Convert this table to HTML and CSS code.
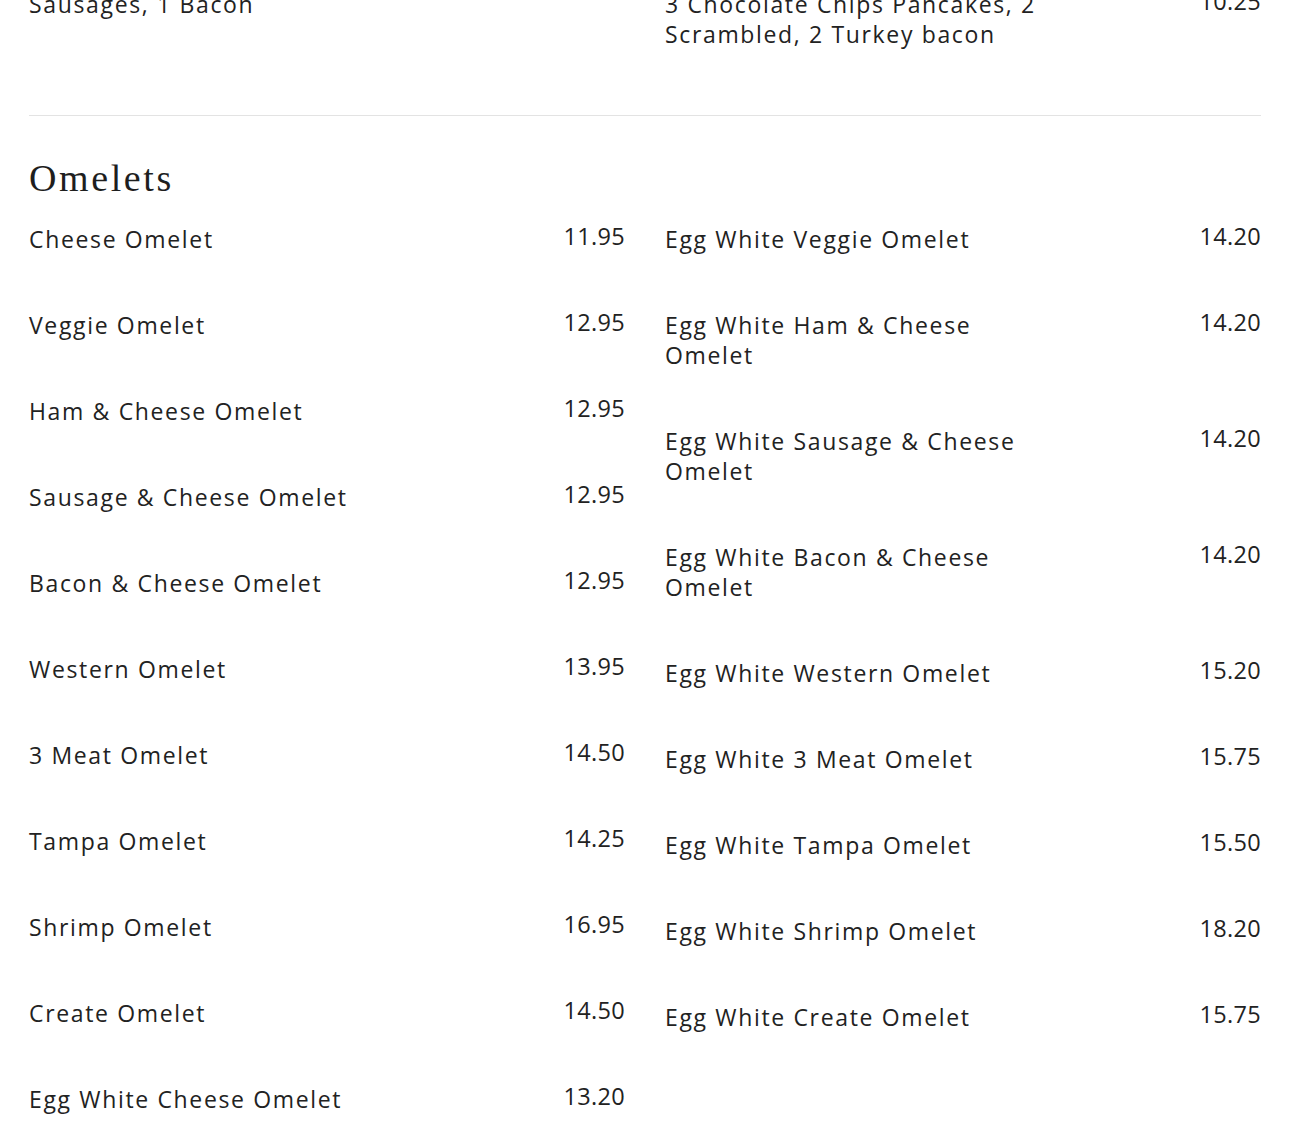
FILE: index.html
```html
<!DOCTYPE html>
<html lang="en">
<head>
<meta charset="utf-8">
<title>Menu</title>
<link rel="stylesheet" href="styles.css">
</head>
<body>
<main class="menu">
  <section class="menu-section">
    <h2 class="section-title">Breakfast Combos</h2>
    <div class="columns">
      <ul class="items">
        <li class="item"><span class="name">Pancake Combo</span><span class="price">9.95</span></li>
        <li class="item"><span class="name">2 Pancakes, 2 Scrambled, 2 Sausages, 1 Bacon</span><span class="price">10.25</span></li>
      </ul>
      <ul class="items">
        <li class="item"><span class="name">3 Pancakes, 2 Scrambled, 2 Turkey Sausages</span><span class="price">10.25</span></li>
        <li class="item"><span class="name">3 Chocolate Chips Pancakes, 2 Scrambled, 2 Turkey bacon</span><span class="price">10.25</span></li>
      </ul>
    </div>
  </section>

  <section class="menu-section">
    <h2 class="section-title">Omelets</h2>
    <div class="columns">
      <ul class="items">
        <li class="item"><span class="name">Cheese Omelet</span><span class="price">11.95</span></li>
        <li class="item"><span class="name">Veggie Omelet</span><span class="price">12.95</span></li>
        <li class="item"><span class="name">Ham &amp; Cheese Omelet</span><span class="price">12.95</span></li>
        <li class="item"><span class="name">Sausage &amp; Cheese Omelet</span><span class="price">12.95</span></li>
        <li class="item"><span class="name">Bacon &amp; Cheese Omelet</span><span class="price">12.95</span></li>
        <li class="item"><span class="name">Western Omelet</span><span class="price">13.95</span></li>
        <li class="item"><span class="name">3 Meat Omelet</span><span class="price">14.50</span></li>
        <li class="item"><span class="name">Tampa Omelet</span><span class="price">14.25</span></li>
        <li class="item"><span class="name">Shrimp Omelet</span><span class="price">16.95</span></li>
        <li class="item"><span class="name">Create Omelet</span><span class="price">14.50</span></li>
        <li class="item"><span class="name">Egg White Cheese Omelet</span><span class="price">13.20</span></li>
      </ul>
      <ul class="items">
        <li class="item"><span class="name">Egg White Veggie Omelet</span><span class="price">14.20</span></li>
        <li class="item"><span class="name">Egg White Ham &amp; Cheese Omelet</span><span class="price">14.20</span></li>
        <li class="item"><span class="name">Egg White Sausage &amp; Cheese Omelet</span><span class="price">14.20</span></li>
        <li class="item"><span class="name">Egg White Bacon &amp; Cheese Omelet</span><span class="price">14.20</span></li>
        <li class="item"><span class="name">Egg White Western Omelet</span><span class="price">15.20</span></li>
        <li class="item"><span class="name">Egg White 3 Meat Omelet</span><span class="price">15.75</span></li>
        <li class="item"><span class="name">Egg White Tampa Omelet</span><span class="price">15.50</span></li>
        <li class="item"><span class="name">Egg White Shrimp Omelet</span><span class="price">18.20</span></li>
        <li class="item"><span class="name">Egg White Create Omelet</span><span class="price">15.75</span></li>
      </ul>
    </div>
  </section>
</main>
</body>
</html>
```
FILE: styles.css
```css
html, body {
  margin: 0;
  padding: 0;
  background: #ffffff;
}

body {
  font-family: "Open Sans", "Liberation Sans", sans-serif;
  color: #222222;
  overflow: hidden;
}

.menu {
  margin-top: -235px;
  padding: 0 29px;
}

.menu-section {
  padding: 40px 0 66px;
}

.menu-section + .menu-section {
  border-top: 1px solid #e3e3e3;
}

.section-title {
  margin: 0 0 24px;
  font-family: "Liberation Serif", "Times New Roman", serif;
  font-weight: 400;
  font-size: 38px;
  line-height: 44px;
  letter-spacing: 2.6px;
  color: #1e1e1e;
}

.columns {
  display: grid;
  grid-template-columns: 1fr 1fr;
  column-gap: 40px;
  align-items: start;
}

.items {
  list-style: none;
  margin: 0;
  padding: 0;
  display: flex;
  flex-direction: column;
  gap: 56px;
}

.item {
  display: flex;
  justify-content: space-between;
  align-items: flex-start;
}

.name {
  max-width: 385px;
  font-size: 23px;
  line-height: 30px;
  letter-spacing: 1.65px;
}

.price {
  font-size: 23.5px;
  line-height: 25px;
  letter-spacing: 0.3px;
}
```
